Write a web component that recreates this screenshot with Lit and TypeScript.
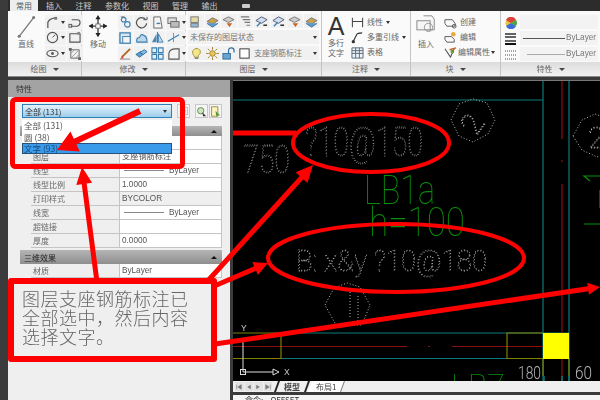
import { LitElement, css, html, svg } from "lit";
import { customElement } from "lit/decorators.js";

const ICONS: Record<string, unknown> = {
  pline: svg`<path d="M2 13V7Q3 3 10 2" fill="none" stroke="#555" stroke-width="1.3"/><rect x="9" y="1" width="3" height="3" fill="#777"/>`,
  undo: svg`<path d="M4 4H10Q13 4 13 7T10 11H3" fill="none" stroke="#555" stroke-width="1.2"/><rect x="1" y="9" width="3" height="3" fill="none" stroke="#555"/>`,
  circle: svg`<circle cx="7" cy="7" r="5.5" fill="none" stroke="#555" stroke-width="1.2"/><path d="M7 7L10 4" stroke="#555"/>`,
  rect: svg`<path d="M2 3H13V12H2Z" fill="none" stroke="#555" stroke-width="1.2"/><rect x="10" y="1" width="3" height="3" fill="#888"/>`,
  ellipse: svg`<ellipse cx="7" cy="7" rx="6" ry="3.5" fill="none" stroke="#555" stroke-width="1.2"/><circle cx="7" cy="7" r="1.5" fill="#555"/>`,
  hatch: svg`<path d="M3 3H12V12H3Z" fill="none" stroke="#666"/><path d="M3 7L7 3M3 12L12 3M8 12L12 8" stroke="#999"/><path d="M1 1H4V4H1ZM11 11H14V14H11Z" fill="#666"/>`,
  copy: svg`<circle cx="5" cy="4" r="2.5" fill="none" stroke="#3a7fb0" stroke-width="1.2"/><circle cx="9" cy="9" r="3" fill="none" stroke="#3a7fb0" stroke-width="1.2"/><path d="M2 1H6" stroke="#666"/>`,
  rotate: svg`<path d="M11.5 4A5.5 5.5 0 1 0 12.5 8" fill="none" stroke="#555" stroke-width="1.3"/><path d="M9 4H13V1" fill="none" stroke="#555"/>`,
  mirrorSheet: svg`<path d="M3 1H10L12 13H3Z" fill="#f4f4f4" stroke="#666"/><path d="M6 8H10" stroke="#3a7fb0" stroke-width="1.5"/>`,
  stack: svg`<rect x="1" y="2" width="9" height="6" fill="#ddd" stroke="#666"/><rect x="4" y="6" width="9" height="6" fill="#bbb" stroke="#666"/>`,
  fillet: svg`<path d="M1 2H12V13H1Z" fill="#dbe8f3" stroke="#3a7fb0" stroke-width="1.4"/><rect x="4" y="6" width="8" height="7" fill="#f4f4f4" stroke="#3a7fb0"/>`,
  cloud: svg`<path d="M2 12Q1 7 5 7Q6 2 10 5Q13 6 13 12Z" fill="#bcd7ea" stroke="#3a7fb0" stroke-width="1.2"/>`,
  mirror: svg`<path d="M7 1V13" stroke="#666"/><path d="M6 3V12H1Z" fill="#4a87b5"/><path d="M8 3V12H13Z" fill="#bcd7ea" stroke="#4a87b5"/>`,
  trim: svg`<path d="M1 11L13 4" stroke="#3a7fb0" stroke-width="1.3"/><path d="M7 2V12" stroke="#888"/>`,
  brush: svg`<path d="M3 11L12 2" stroke="#b5651d" stroke-width="2"/><path d="M1 13L4 10L5 12Z" fill="#d33"/><path d="M1 13H12" stroke="#888"/>`,
  blocks: svg`<path d="M1 8L6 5L10 7L5 11Z" fill="#5b9bd0" stroke="#2f6f9f"/><path d="M5 6L10 3L13 5L9 8Z" fill="#8cbde0" stroke="#2f6f9f"/>`,
  array: svg`<path d="M1 1H6V6H1ZM8 1H13V6H8ZM1 8H6V13H1ZM8 8H13V13H8Z" fill="#e4eff7" stroke="#3a7fb0" stroke-width="1.2"/>`,
  chamfer: svg`<path d="M2 13V7Q3 2 9 2H13V13Z" fill="#f4f4f4" stroke="#555" stroke-width="1.2"/>`,
  layerA: svg`<rect x="2" y="2" width="8" height="6" fill="#e5d9a8" stroke="#777"/><path d="M2 9H10V13H2Z" fill="#8fb8d8" stroke="#777"/>`,
  layerB: svg`<path d="M1 7L7 3L13 6L7 10Z" fill="#c8a24a" stroke="#777"/><path d="M1 9L7 13L13 9" fill="#5b9bd0" stroke="#2f6f9f"/>`,
  layerC: svg`<path d="M1 5L7 2L13 5L7 8Z" fill="#ccc" stroke="#777"/><path d="M5 9H11L8 13Z" fill="#c8641e"/>`,
  layerD: svg`<path d="M2 2H11M4 5H12M6 8H12M8 11H12" stroke="#777" stroke-width="1.2"/>`,
  layerE: svg`<path d="M1 6L7 2L13 5L7 9Z" fill="#cfe0ee" stroke="#557"/><path d="M2 12L6 8" stroke="#3a7fb0" stroke-width="1.5"/><path d="M9 11H13" stroke="#222" stroke-width="1.5"/>`,
  bulb: svg`<path d="M4 9Q1 5 5 2Q9 0 11 4Q12 7 9 9V11H5Z" fill="#f4e58a" stroke="#a2933c"/><path d="M5 12H9" stroke="#777" stroke-width="1.5"/>`,
  sun: svg`<circle cx="7" cy="7" r="3" fill="#e9c55c" stroke="#a08428"/><path d="M7 0V3M7 11V14M0 7H3M11 7H14M2 2L4 4M10 10L12 12M12 2L10 4M4 10L2 12" stroke="#a08428"/>`,
  lock: svg`<rect x="1" y="7" width="8" height="6" fill="#6aa3cd" stroke="#2f6f9f"/><path d="M7 7V4Q7 1 10 1T13 4V6" fill="none" stroke="#2f6f9f" stroke-width="1.3"/>`,
  swatch: svg`<rect x="2" y="2" width="10" height="10" fill="#fff" stroke="#333"/>`,
  linear: svg`<path d="M1.5 2V12M12.5 2V12M1.5 6H12.5" stroke="#444" stroke-width="1.1" fill="none"/>`,
  leader: svg`<path d="M2 12L6 4Q7 2 12 2" stroke="#333" stroke-width="1.2" fill="none"/><circle cx="2.5" cy="11.5" r="1.8" fill="#333"/>`,
  table: svg`<path d="M1 2H13V13H1ZM1 5H13M1 8H13M5 2V13M9 2V13" fill="#eef3f8" stroke="#567"/>`,
  create: svg`<path d="M1 4H9L12 8V11H3L1 8Z" fill="none" stroke="#555"/><circle cx="11" cy="11" r="2" fill="none" stroke="#555"/>`,
  edit: svg`<path d="M1 6H8L11 9V12H3L1 9Z" fill="none" stroke="#555"/><circle cx="10" cy="3.5" r="2.5" fill="#e9a93c"/>`,
  attr: svg`<path d="M1 3L7 12L11 3" fill="none" stroke="#555" stroke-width="1.2"/><path d="M6 4L13 2" stroke="#c8641e" stroke-width="1.5"/><circle cx="9" cy="6" r="2" fill="#6a9a3c"/>`,
  sel: svg`<path d="M2 2H12V12H2Z" fill="none" stroke="#aaa"/><path d="M5 5H9V9H5Z" fill="none" stroke="#bbb"/>`,
  quick: svg`<circle cx="6" cy="6" r="4" fill="#cfe5c2" stroke="#4a7a34"/><path d="M8 8L13 13L9 13Z" fill="#333"/>`,
  pick: svg`<path d="M2 1H10V13H2Z" fill="#fff4c0" stroke="#8a7a2c"/><path d="M7 6L13 12H9L8 14Z" fill="#5a9a3c"/>`,
  first: svg`<path d="M3 3V11M11 3L5 7L11 11Z" fill="#777" stroke="#777"/>`,
  prev: svg`<path d="M10 3L4 7L10 11Z" fill="#777"/>`,
  next: svg`<path d="M4 3L10 7L4 11Z" fill="#777"/>`,
  last: svg`<path d="M11 3V11M3 3L9 7L3 11Z" fill="#777" stroke="#777"/>`,
};

const icon = (name: string, size = 13) =>
  html`<svg class="ic" width=${size} height=${size} viewBox="0 0 14 14">${ICONS[name]}</svg>`;

const tool = (name: string, caret = false) =>
  html`<span class="tool">${icon(name)}${caret ? html`<i class="caret"></i>` : ""}</span>`;

type Row = { name: string; value?: string; line?: boolean; shade?: boolean };

const GENERAL: Row[] = [
  { name: "颜色", value: "" },
  { name: "图层", value: "支座钢筋标注" },
  { name: "线型", value: "ByLayer", line: true },
  { name: "线型比例", value: "1.0000" },
  { name: "打印样式", value: "BYCOLOR", shade: true },
  { name: "线宽", value: "ByLayer", line: true },
  { name: "超链接", value: "" },
  { name: "厚度", value: "0.0000" },
];

const TABS = ["插入", "注释", "参数化", "视图", "管理", "输出"];

// arrow as one polygon: shaft plus head, tip at x2,y2
function arrow(x1: number, y1: number, x2: number, y2: number, w = 5, hl = 17, hw = 9) {
  const len = Math.hypot(x2 - x1, y2 - y1);
  const dx = (x2 - x1) / len;
  const dy = (y2 - y1) / len;
  const nx = -dy;
  const ny = dx;
  const bx = x2 - dx * hl;
  const by = y2 - dy * hl;
  const p = [
    [x1 + (nx * w) / 2, y1 + (ny * w) / 2],
    [bx + (nx * w) / 2, by + (ny * w) / 2],
    [bx + nx * hw, by + ny * hw],
    [x2, y2],
    [bx - nx * hw, by - ny * hw],
    [bx - (nx * w) / 2, by - (ny * w) / 2],
    [x1 - (nx * w) / 2, y1 - (ny * w) / 2],
  ];
  return svg`<polygon points=${p.map((q) => q.join(",")).join(" ")} fill="#f00"/>`;
}

@customElement("app-root")
export class AppRoot extends LitElement {
  static styles = css`
    :host {
      display: block;
      position: relative;
      width: 600px;
      height: 400px;
      overflow: hidden;
      background: #3b3b3b;
      font-family: "Noto Sans CJK SC", "Liberation Sans", sans-serif;
      color: #555;
    }
    .app {
      display: flex;
      flex-direction: column;
      height: 400px;
      padding-left: 8px;
      box-sizing: border-box;
      filter: blur(0.45px);
    }
    .tabs {
      display: flex;
      align-items: center;
      height: 11px;
      flex: none;
      background: #2c2c2c;
      font-size: 8px;
      line-height: 11px;
      color: #c9c9c9;
    }
    .tabs span {
      margin-right: 13.5px;
    }
    .tabs .on {
      width: 28px;
      margin: 0 8px 0 2px;
      text-align: center;
      background: #eee;
      color: #555;
    }
    .tabs .dot {
      width: 8px;
      height: 4px;
      margin-left: 11px;
      background: #ccc;
      border-radius: 1px;
    }
    .ribbon {
      display: flex;
      height: 65px;
      flex: none;
      background: #fafafa;
      border-bottom: 1px solid #8a8a8a;
    }
    .group {
      display: flex;
      flex-direction: column;
      flex: none;
      border-right: 1px solid #c4c4c4;
      box-sizing: border-box;
    }
    .body {
      display: flex;
      flex: 1;
      gap: 3px;
      padding: 4px 2px 0;
      box-sizing: border-box;
      font-size: 8px;
      line-height: 14px;
      min-height: 0;
    }
    .cap {
      height: 14px;
      flex: none;
      background: linear-gradient(#dcdcdc, #f2f2f2);
      text-align: center;
      font-size: 8px;
      line-height: 14px;
      color: #666;
    }
    .cap::after {
      content: "";
      display: inline-block;
      margin-left: 6px;
      border: 3px solid transparent;
      border-top: 3px solid #444;
      border-bottom: 0;
      vertical-align: middle;
    }
    .big {
      display: flex;
      flex-direction: column;
      align-items: center;
      flex: none;
      font-size: 8px;
      line-height: 10px;
      color: #666;
    }
    .grid {
      display: grid;
      gap: 1px 1px;
      grid-auto-rows: 14.5px;
    }
    .tool {
      display: flex;
      align-items: center;
      gap: 2px;
      padding: 0 1px;
      background: #f1f1f1;
      height: 14.5px;
    }
    .caret {
      display: inline-block;
      border: 2.5px solid transparent;
      border-top: 3px solid #333;
      border-bottom: 0;
    }
    .ic {
      flex: none;
      display: block;
    }
    .stack {
      display: flex;
      flex-direction: column;
      gap: 2px;
      min-width: 0;
      flex: 1;
    }
    .line {
      display: flex;
      align-items: center;
      gap: 3px;
      height: 14px;
      white-space: nowrap;
      color: #666;
    }
    .combo {
      display: flex;
      align-items: center;
      justify-content: space-between;
      height: 14px;
      padding: 0 2px;
      background: #f1f1f1;
      white-space: nowrap;
      color: #777;
    }
    .combo .caret {
      margin-left: auto;
    }
    .by {
      display: flex;
      align-items: center;
      gap: 1px;
      height: 14px;
      padding-left: 3px;
      background: #f3f3f3;
      font-family: "Liberation Sans", sans-serif;
      font-size: 8.2px;
      color: #777;
    }
    .stroke {
      width: 42px;
      height: 1px;
      background: #555;
    }
    .stroke.lt {
      background: #aaa;
      margin-left: 4px;
      width: 38px;
    }
    .main {
      display: flex;
      flex: 1;
      gap: 3px;
      min-height: 0;
      margin-top: 3px;
    }
    .panel {
      width: 222px;
      flex: none;
      background: #efefef;
      font-size: 8px;
      color: #666;
    }
    .title {
      height: 17px;
      background: #a3a3a3;
      padding-left: 8px;
      font-size: 8px;
      line-height: 17px;
      color: #333;
    }
    .picker {
      display: flex;
      align-items: center;
      gap: 2px;
      height: 14px;
      margin: 7px 0 8px 14px;
    }
    .select {
      display: flex;
      align-items: center;
      justify-content: space-between;
      width: 150px;
      height: 14px;
      padding: 0 4px 0 2px;
      box-sizing: border-box;
      background: linear-gradient(#e4f2fb, #9ccdeb);
      border: 1px solid #2d7fb8;
      color: #333;
    }
    .btn {
      display: flex;
      align-items: center;
      justify-content: center;
      width: 13px;
      height: 14px;
      border: 1px solid #c8c8c8;
      box-sizing: border-box;
      background: #f5f5f5;
    }
    .section {
      margin-left: 12px;
      width: 202px;
    }
    .head {
      display: flex;
      align-items: center;
      justify-content: space-between;
      padding: 0 5px 0 4px;
      height: 14px;
      background: linear-gradient(#b5b5b5, #8e8e8e);
      color: #222;
    }
    .head.first {
      height: 10px;
    }
    .head::after {
      content: "";
      margin-left: auto;
      border: 3px solid transparent;
      border-bottom: 3px solid #111;
      border-top: 0;
    }
    .rows {
      margin-bottom: 2px;
    }
    .row {
      display: grid;
      grid-template-columns: 11px 89px 102px;
      height: 14px;
      line-height: 13px;
      box-sizing: border-box;
    }
    .row b {
      font-weight: 400;
      border: 0 solid #c4c4c4;
      border-width: 0 1px 1px 0;
      padding-left: 2px;
      white-space: nowrap;
      overflow: hidden;
    }
    .row b.val {
      background: #fff;
      font-family: "Liberation Sans", "Noto Sans CJK SC", sans-serif;
      font-size: 8.2px;
      display: flex;
      align-items: center;
      gap: 5px;
      color: #555;
    }
    .row b.val.shade {
      background: #efefef;
    }
    .row .rule {
      width: 40px;
      height: 1px;
      margin-left: 2px;
      background: #888;
    }
    .list {
      position: absolute;
      left: 22px;
      top: 120px;
      width: 150px;
      height: 34px;
      background: #fff;
      font-size: 8.5px;
      line-height: 11.5px;
      color: #555;
    }
    .list div {
      padding-left: 2px;
    }
    .list .sel {
      background: #3a9bea;
      color: #1a4a78;
      border: 1px solid #27527a;
      height: 11px;
      line-height: 9px;
      box-sizing: border-box;
      padding-left: 1px;
    }
    .side {
      flex: 1;
      display: flex;
      flex-direction: column;
      min-width: 0;
    }
    .canvas {
      display: block;
      flex: none;
      background: #000;
      border-top: 1px solid #777;
    }
    .strip {
      display: flex;
      align-items: stretch;
      gap: 2px;
      height: 11px;
      flex: none;
      padding-left: 2px;
      background: #efefef;
      font-size: 8px;
      line-height: 11px;
      color: #444;
    }
    .nav {
      display: flex;
      align-items: center;
      gap: 1px;
      margin-right: 2px;
    }
    .nav span {
      display: flex;
      align-items: center;
      justify-content: center;
      width: 8.5px;
      height: 9px;
      background: #e2e2e2;
    }
    .strip .tab {
      padding: 0 6px;
      background: #fff;
      transform: skewX(-20deg);
      border-right: 1px solid #777;
    }
    .strip .tab span {
      display: block;
      transform: skewX(20deg);
    }
    .strip .tab.on {
      background: #efefef;
      font-weight: 700;
      border-left: 2px solid #222;
      border-right: 2px solid #222;
    }
    .cmd {
      flex: 1;
      margin-top: 3px;
      padding-left: 12px;
      background: #f5f5f5;
      font-size: 8px;
      line-height: 10px;
      color: #333;
      white-space: pre;
    }
    .marks {
      position: absolute;
      left: 0;
      top: 0;
      pointer-events: none;
    }
    .note {
      position: absolute;
      left: 8px;
      top: 278px;
      width: 209px;
      height: 84px;
      box-sizing: border-box;
      padding: 5px 0 0 8px;
      background: #efefef;
      border: 6px solid #f00;
      border-radius: 3px;
      font-size: 18px;
      font-weight: 300;
      line-height: 19px;
      letter-spacing: 0.5px;
      text-spacing-trim: space-all;
      white-space: nowrap;
      color: #666;
      filter: blur(0.3px);
    }
  `;

  private renderRibbon() {
    return html`
      <div class="ribbon">
        <div class="group" style="width:74px">
          <div class="body">
            <div class="big" style="width:32px">
              <svg width="24" height="23" viewBox="0 0 24 27">
                <path d="M4 25L21 3" stroke="#777" stroke-width="1.5" />
                <circle cx="4" cy="25" r="1.8" fill="#777" />
                <circle cx="21" cy="3" r="1.8" fill="#777" />
              </svg>
              <span style="margin-top:1px">直线</span>
            </div>
            <div class="grid" style="grid-template-columns:21px 16px">
              ${tool("pline", true)}${tool("undo")}${tool("circle", true)}${tool("rect")}${tool("ellipse", true)}${tool("hatch")}
            </div>
          </div>
          <div class="cap">绘图</div>
        </div>
        <div class="group" style="width:104px">
          <div class="body">
            <div class="big" style="width:28px">
              <svg width="20" height="23" viewBox="0 0 22 27">
                <path d="M11 3V24M1 13H21" stroke="#333" stroke-width="1.5" />
                <path d="M11 0L8 5H14ZM11 26L8 21H14ZM0 13L5 10V16ZM22 13L17 10V16Z" fill="#222" />
                <rect x="8.5" y="10.5" width="5" height="5" fill="#fff" stroke="#666" />
              </svg>
              <span style="margin-top:1px">移动</span>
            </div>
            <div class="grid" style="grid-template-columns:15px 15px 15px 20px;margin-left:3px">
              ${tool("copy")}${tool("rotate")}${tool("mirrorSheet")}${tool("stack", true)}
              ${tool("fillet")}${tool("cloud")}${tool("mirror")}${tool("trim", true)}
              ${tool("brush")}${tool("blocks")}${tool("array")}${tool("chamfer", true)}
            </div>
          </div>
          <div class="cap">修改</div>
        </div>
        <div class="group" style="width:136px">
          <div class="body" style="padding-top:3px">
            <div class="stack">
              <div class="line" style="gap:1px">
                ${["layerA", "layerB", "layerC", "layerD", "layerE", "layerE", "layerC", "layerB"].map(
                  (n) => html`<span class="tool" style="width:14px">${icon(n)}</span>`,
                )}
              </div>
              <div class="combo">未保存的图层状态<i class="caret"></i></div>
              <div class="combo" style="justify-content:flex-start;gap:3px">
                ${icon("bulb")}${icon("sun")}${icon("lock")}${icon("swatch")}
                <span>支座钢筋标注</span><i class="caret"></i>
              </div>
            </div>
          </div>
          <div class="cap">图层</div>
        </div>
        <div class="group" style="width:89px">
          <div class="body">
            <div class="big" style="width:24px">
              <span style="font:400 25px/22px 'Liberation Sans',sans-serif;color:#333">A</span>
              <span style="margin-top:1px">多行</span><span>文字</span>
            </div>
            <div class="stack" style="gap:1px">
              <div class="line">${icon("linear")}线性<i class="caret"></i></div>
              <div class="line">${icon("leader")}多重引线<i class="caret"></i></div>
              <div class="line">${icon("table")}表格</div>
            </div>
          </div>
          <div class="cap">注释</div>
        </div>
        <div class="group" style="width:90px">
          <div class="body">
            <div class="big" style="width:26px">
              <svg width="24" height="19" viewBox="0 0 24 23">
                <path d="M9 1H19L22 5V18H13" fill="#f6f6f6" stroke="#777" />
                <rect x="1" y="7" width="16" height="11" fill="#f6f6f6" stroke="#777" />
                <circle cx="15" cy="15" r="5" fill="none" stroke="#888" />
              </svg>
              <span style="margin-top:5px">插入</span>
            </div>
            <div class="stack" style="gap:1px;margin-left:2px">
              <div class="line">${icon("create")}创建</div>
              <div class="line">${icon("edit")}编辑</div>
              <div class="line" style="gap:1px">${icon("attr")}编辑属性<i class="caret"></i></div>
            </div>
          </div>
          <div class="cap">块</div>
        </div>
        <div class="group" style="flex:1;border:0">
          <div class="body">
            <div class="stack" style="flex:none;width:12px;gap:4px;padding-top:2px;margin-left:2px">
              <svg width="12" height="12" viewBox="0 0 12 12">
                <circle cx="6" cy="6" r="5.5" fill="#e8c23a" />
                <path d="M6 6L1 3A5.5 5.5 0 0 1 11 3Z" fill="#d8433a" />
                <path d="M6 6L1 9A5.5 5.5 0 0 0 11 9Z" fill="#3a6fd8" />
                <path d="M6 6L11 9A5.5 5.5 0 0 0 11 3Z" fill="#46a848" />
              </svg>
              <svg width="11" height="12" viewBox="0 0 11 12"><path d="M0 1H11M0 4H11M0 8H11" stroke="#333" stroke-width="1.5" /><path d="M0 11H11" stroke="#111" stroke-width="2" /></svg>
              <svg width="11" height="12" viewBox="0 0 11 12"><path d="M0 2H11M0 6H11M0 10H11" stroke="#888" stroke-dasharray="1 1" stroke-width="1.5" /></svg>
            </div>
            <div class="stack" style="gap:2px;padding-top:0">
              <div class="by"></div>
              <div class="by"><i class="stroke"></i>ByLayer</div>
              <div class="by"><i class="stroke lt"></i>ByLayer</div>
            </div>
          </div>
          <div class="cap">特性</div>
        </div>
      </div>
    `;
  }

  private renderPanel() {
    return html`
      <div class="panel">
        <div class="title">特性</div>
        <div class="picker">
          <div class="select">全部 (131)<i class="caret"></i></div>
          <span class="btn" style="margin-left:3px">${icon("sel", 10)}</span>
          <span class="btn" style="margin-left:3px">${icon("quick", 11)}</span>
          <span class="btn" style="margin-left:-1px">${icon("pick", 11)}</span>
        </div>
        <div class="section">
          <div class="head first"></div>
          <div class="rows">${GENERAL.map((r) => this.renderRow(r))}</div>
          <div class="head">三维效果</div>
          ${this.renderRow({ name: "材质", value: "ByLayer" })}
        </div>
      </div>
    `;
  }

  private renderRow(r: Row) {
    return html`
      <div class="row">
        <span></span>
        <b>${r.name}</b>
        <b class="val ${r.shade ? "shade" : ""}">
          ${r.line ? html`<i class="rule"></i>` : ""}${r.value}
        </b>
      </div>
    `;
  }

  private renderCanvas() {
    // thin face with a dashed stroke reads as the dotted CAD single-line font
    const dash = (x: number, y: number, size: number, len: number, t: string) =>
      svg`<text x=${x} y=${y} font-size=${size} textLength=${len} lengthAdjust="spacingAndGlyphs" fill="none" stroke="#b0b0b0" stroke-width="0.8" stroke-dasharray="1 2.2" font-family="Roboto" font-weight="100">${t}</text>`;
    const green = (x: number, y: number, size: number, len: number, t: string) =>
      svg`<text x=${x} y=${y} font-size=${size} textLength=${len} lengthAdjust="spacingAndGlyphs" fill="#0a8f0a" font-family="Roboto" font-weight="100">${t}</text>`;
    const plain = (x: number, y: number, size: number, len: number, t: string) =>
      svg`<text x=${x} y=${y} font-size=${size} textLength=${len} lengthAdjust="spacingAndGlyphs" fill="#b5b5b5" font-family="Roboto" font-weight="300">${t}</text>`;
    const outline = "fill:none;stroke:#b5b5b5;stroke-width:1;stroke-dasharray:1 2";
    return html`
      <svg class="canvas" width="367" height="300" viewBox="233 81 367 300">
        <g fill="none" stroke="#0c7a7a" stroke-width="1.2">
          <path d="M233 100H543M543 80V381M569 80V381M281 333H569M281 358.5H507" />
        </g>
        <g fill="none" stroke="#8a0f0f" stroke-width="1.2">
          <path d="M562 80V139M562 160V162M562 184V381M233 346.5H407M428 346.5H430M452 346.5H543" />
        </g>
        <g fill="none" stroke="#808000" stroke-width="1.2">
          <path d="M233 333H281V358.5H233M543 333H507V358.5H543M543 358V376M569 358V376" />
        </g>
        <rect x="543" y="333" width="26" height="26" fill="#ff0" />
        <path d="M544 376V381M562 376V381M569 376V381" stroke="#0c7a7a" stroke-width="1.5" />
        ${dash(243, 173, 39, 47, "750")} ${dash(305, 156, 41, 118, "?10@150")}
        ${dash(296, 271, 30, 191, "B: x&y ?10@180")}
        ${green(364, 204, 41, 71, "LB1a")} ${green(369, 236, 41, 96, "h=100")}
        ${green(451, 395, 30, 54, "LB7")}
        ${plain(518, 379, 18, 23, "180")} ${plain(575, 379, 18, 17, "60")}
        <polygon points="451,120 459,104 473,99 487,103 495,120 488,134 473,142 459,136" style=${outline} />
        <text x="461" y="132" font-size="30" font-family="Roboto" font-weight="100" transform="rotate(-55 473 120)" style=${outline}>2</text>
        <polygon points="573,136 582,120 595,114 612,120 612,150 597,157 582,150" style=${outline} />
        <text x="588" y="148" font-size="30" font-family="Roboto" font-weight="100" style=${outline}>2</text>
        <polygon points="325,305 334,288 347,283 360,287 370,305 362,325 336,325" style=${outline} />
        <path d="M350 292V318M358 296V325" style=${outline} />
        <path d="M600 176H584L590 181M600 224H584M600 190V208" fill="none" stroke="#0a8f0a" stroke-width="1.2" />
        <path d="M243 342V372H273" fill="none" stroke="#ddd" />
        <rect x="240.5" y="369.5" width="5" height="5" fill="none" stroke="#ddd" />
        <path d="M273 369L279 372L273 375Z" fill="none" stroke="#ddd" />
        <text x="241" y="331" font-size="8.5" fill="#ccc" font-family="Liberation Sans">Y</text>
        <text x="284" y="375" font-size="8.5" fill="#ccc" font-family="Liberation Sans">X</text>
      </svg>
    `;
  }

  protected render() {
    return html`
      <div class="app">
        <div class="tabs">
          <span class="on">常用</span>
          ${TABS.map((t) => html`<span>${t}</span>`)}
          <span class="dot"></span>
        </div>
        ${this.renderRibbon()}
        <div class="main">
          ${this.renderPanel()}
          <div class="side">
            ${this.renderCanvas()}
            <div class="strip">
              <div class="nav">
                ${["first", "prev", "next", "last"].map((n) => html`<span>${icon(n, 8)}</span>`)}
              </div>
              <div class="tab on"><span>模型</span></div>
              <div class="tab"><span>布局1</span></div>
            </div>
            <div class="cmd">命令:    OFFSET</div>
          </div>
        </div>
      </div>
      <div class="list">
        <div>全部 (131)</div>
        <div>圆 (38)</div>
        <div class="sel">文字 (93)</div>
      </div>
      <svg class="marks" width="600" height="400" viewBox="0 0 600 400">
        <rect x="12.5" y="99.5" width="170" height="67" rx="3" fill="none" stroke="#f00" stroke-width="5" />
        <path d="M233 133H296" stroke="#f00" stroke-width="5" fill="none" />
        <ellipse cx="371" cy="143" rx="78" ry="29" fill="none" stroke="#f00" stroke-width="4" />
        <ellipse cx="396" cy="258" rx="128" ry="34" fill="none" stroke="#f00" stroke-width="4" />
        ${arrow(140, 111, 57, 150, 6, 20, 11)} ${arrow(97, 282, 82, 167, 5, 17, 8)}
        ${arrow(205, 284, 313, 165, 5, 17, 8)} ${arrow(205, 290, 268, 263, 5, 14, 7)}
        ${arrow(215, 344, 600, 287, 5, 12, 6)}
      </svg>
      <div class="note">图层支座钢筋标注已<br />全部选中${"\uFF0C"}然后内容<br />选择文字。</div>
    `;
  }
}
